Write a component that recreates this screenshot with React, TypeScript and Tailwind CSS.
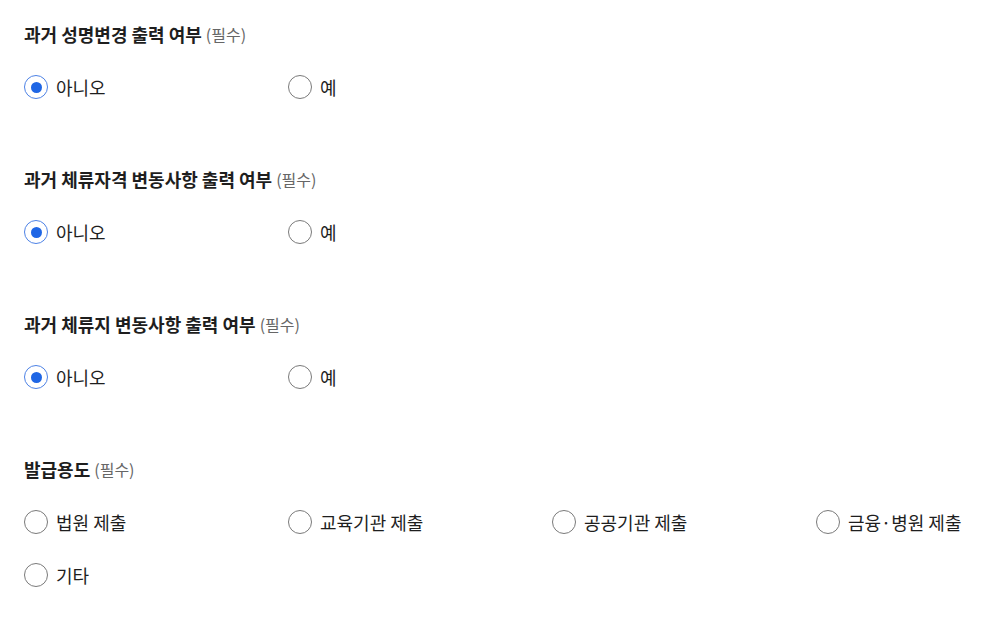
import { useState } from 'react';

type Section = {
  key: string;
  title: string;
  options: string[];
  initial: string | null;
};

const sections: Section[] = [
  { key: 'name', title: '과거 성명변경 출력 여부', options: ['아니오', '예'], initial: '아니오' },
  { key: 'status', title: '과거 체류자격 변동사항 출력 여부', options: ['아니오', '예'], initial: '아니오' },
  { key: 'addr', title: '과거 체류지 변동사항 출력 여부', options: ['아니오', '예'], initial: '아니오' },
  {
    key: 'purpose',
    title: '발급용도',
    options: ['법원 제출', '교육기관 제출', '공공기관 제출', '금융·병원 제출', '기타'],
    initial: null,
  },
];

function Radio({ checked, label, onSelect }: { checked: boolean; label: string; onSelect: () => void }): JSX.Element {
  return (
    <label className="flex h-6 cursor-pointer items-center gap-2" onClick={onSelect}>
      <span
        className={
          checked
            ? 'flex h-6 w-6 shrink-0 items-center justify-center rounded-full border border-[#4d82e6] bg-white'
            : 'flex h-6 w-6 shrink-0 items-center justify-center rounded-full border border-[#7a7a7a] bg-white'
        }
      >
        {checked ? <span className="h-[11px] w-[11px] rounded-full bg-[#1f66e5]" /> : null}
      </span>
      <span className="whitespace-nowrap text-[18px] leading-6 text-[#1e1e1e]">{label}</span>
    </label>
  );
}

export default function App(): JSX.Element {
  const [values, setValues] = useState<Record<string, string | null>>(
    Object.fromEntries(sections.map((s) => [s.key, s.initial])),
  );

  return (
    <main
      className="min-h-screen overflow-hidden bg-white pl-6 pt-[22px]"
      style={{ fontFamily: '"Noto Sans CJK KR", "Noto Sans", sans-serif' }}
    >
      <div className="flex flex-col gap-[68px]">
        {sections.map((s) => (
          <section key={s.key}>
            <h2 className="flex h-6 items-center gap-1 text-[18px] font-bold leading-6 text-[#1e1e1e]">
              {s.title}
              <span className="text-[16px] font-normal text-[#666]">(필수)</span>
            </h2>
            <div className="mt-[29px] grid grid-cols-[264px_264px_264px_auto] gap-y-[29px]">
              {s.options.map((o) => (
                <Radio
                  key={o}
                  label={o}
                  checked={values[s.key] === o}
                  onSelect={() => setValues((v) => ({ ...v, [s.key]: o }))}
                />
              ))}
            </div>
          </section>
        ))}
      </div>
    </main>
  );
}
